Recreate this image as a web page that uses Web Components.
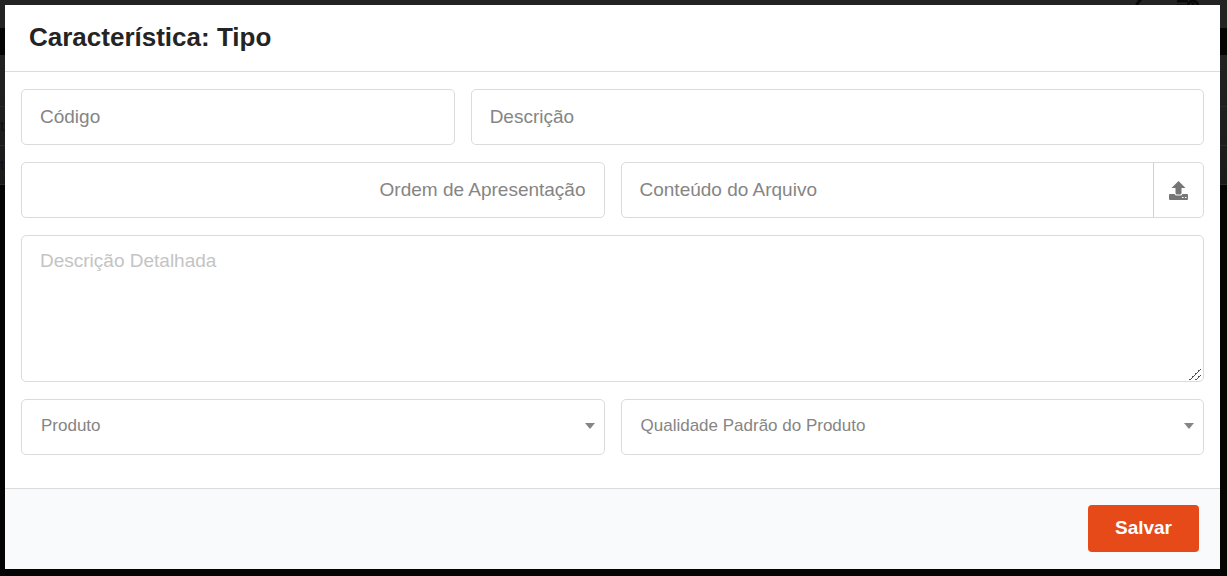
<!DOCTYPE html>
<html lang="pt-BR">
<head>
<meta charset="utf-8">
<meta name="viewport" content="width=device-width, initial-scale=1">
<title>Característica: Tipo</title>
<style>
    body{
        margin: 0;
        min-height: 100vh;
        background: #040404;
        font-family: "Liberation Sans", Arial, sans-serif;
        color: #242424;
    }
</style>
</head>
<body>
<page-backdrop></page-backdrop>
<modal-dialog heading="Característica: Tipo">
    <form-grid>
        <text-field span="3" label="Código"></text-field>
        <text-field span="5" label="Descrição"></text-field>
        <text-field span="4" label="Ordem de Apresentação" align="right"></text-field>
        <file-field span="4" label="Conteúdo do Arquivo"></file-field>
        <area-field span="8" label="Descrição Detalhada"></area-field>
        <select-field span="4" label="Produto"></select-field>
        <select-field span="4" label="Qualidade Padrão do Produto"></select-field>
    </form-grid>
    <save-button slot="footer">Salvar</save-button>
</modal-dialog>

<script>
const boxStyle = `
    *{
        box-sizing: border-box;
    }

    :host{
        display: block;
        min-width: 0;
    }

    .box{
        display: grid;
        height: 56px;
        border: 1px solid #dbdbdb;
        border-radius: 5px;
        background: white;
        color: #858585;
    }

    .box:focus-within{
        border-color: #e64a19;
    }

    input, select, textarea{
        width: 100%;
        margin: 0;
        border: 0;
        outline: 0;
        background: transparent;
        color: #242424;
        font-family: inherit;
        font-size: 19px;
    }
`;

// The dimmed page that shows round the dialog
class PageBackdrop extends HTMLElement {
    constructor(){
        super();
        this.attachShadow({mode: "open"});
    }

    connectedCallback(){
        this.setAttribute("aria-hidden", "true");
        this.shadowRoot.innerHTML = `
            <style>
                :host{
                    position: absolute;
                    inset: 0;
                    z-index: -1;
                    overflow: hidden;
                    font-size: 15px;
                    line-height: 38px;
                    color: #0b0f1c;
                }

                .bar{
                    display: flex;
                    justify-content: flex-end;
                    gap: 25px;
                    height: 28px;
                    padding-right: 28px;
                    background: #232323;
                }

                .bar svg{
                    fill: none;
                    stroke: #080808;
                    stroke-width: 3;
                }

                .rows{
                    height: 130px;
                    margin-top: 27px;
                    background: linear-gradient(#222, #1a1a1a);
                }

                .head{
                    height: 51px;
                    border-bottom: 1px solid #292929;
                }

                .line{
                    border-bottom: 1px solid #292929;
                }
            </style>
            <div class="bar">
                <svg width="20" height="22"><path d="M9 -1C5 3 3 8 3 14"/></svg>
                <svg width="22" height="22"><path d="M0 1H11M0 6H9"/><circle cx="16" cy="6" r="5"/><path d="M16 3V9"/></svg>
            </div>
            <div class="rows">
                <div class="head"></div>
                <div class="line">ti</div>
                <div class="line">ti</div>
            </div>
        `;
    }
}

class ModalDialog extends HTMLElement {
    constructor(){
        super();
        this.attachShadow({mode: "open"});
    }

    get heading(){
        return this.getAttribute("heading");
    }

    connectedCallback(){
        this.shadowRoot.innerHTML = `
            <style>
                :host{
                    display: block;
                    margin: 0 7px 0 5px;
                    padding: 5px 0 7px;
                }

                section{
                    background: white;
                }

                header{
                    padding: 16px 24px 18px;
                    border-bottom: 1px solid #dbdbdb;
                }

                h1{
                    margin: 0;
                    font-size: 26px;
                    line-height: 32px;
                }

                .content{
                    padding: 17px 16px 33px;
                }

                footer{
                    display: flex;
                    justify-content: flex-end;
                    padding: 16px 21px 17px;
                    border-top: 1px solid #dbdbdb;
                    background: #f8fafc;
                }
            </style>
            <section role="dialog" aria-modal="true" aria-labelledby="heading">
                <header><h1 id="heading">${this.heading}</h1></header>
                <div class="content"><slot></slot></div>
                <footer><slot name="footer"></slot></footer>
            </section>
        `;
    }
}

class FormGrid extends HTMLElement {
    constructor(){
        super();
        this.attachShadow({mode: "open"});
    }

    connectedCallback(){
        this.shadowRoot.innerHTML = `
            <style>
                :host{
                    display: grid;
                    grid-template-columns: repeat(8, minmax(0, 1fr));
                    gap: 17px 16px;
                }

                ::slotted([span="3"]){ grid-column: span 3; }
                ::slotted([span="4"]){ grid-column: span 4; }
                ::slotted([span="5"]){ grid-column: span 5; }
                ::slotted([span="8"]){ grid-column: span 8; }
            </style>
            <slot></slot>
        `;
    }
}

class FormField extends HTMLElement {
    constructor(){
        super();
        this.attachShadow({mode: "open"});
    }

    get label(){
        return this.getAttribute("label");
    }

    connectedCallback(){
        this.render();
    }
}

class TextField extends FormField {
    get align(){
        return this.getAttribute("align") || "left";
    }

    render(){
        this.shadowRoot.innerHTML = `
            <style>
                ${boxStyle}

                .box{
                    grid-template-columns: minmax(0, 1fr) auto;
                }

                label, input{
                    grid-area: 1 / 1;
                    padding: 0 18px;
                    text-align: ${this.align};
                }

                label{
                    font-size: 19px;
                    line-height: 54px;
                    white-space: nowrap;
                }

                .box:has(input:not(:placeholder-shown)) label{
                    visibility: hidden;
                }

                button{
                    display: grid;
                    place-items: center;
                    width: 50px;
                    padding: 0;
                    border: 0;
                    border-left: 1px solid #d0d0d0;
                    background: none;
                    color: #757575;
                }
            </style>
            <div class="box">
                <label for="field">${this.label}</label>
                <input id="field" type="text" placeholder=" ">
                ${this.addon()}
            </div>
        `;
    }

    addon(){
        return "";
    }
}

class FileField extends TextField {
    addon(){
        return `
            <button type="button" aria-label="Enviar arquivo">
                <svg width="20" height="20" viewBox="0 0 20 20" fill="currentColor">
                    <path d="M9.5 1L16.5 8H12.5V13Q12.5 14.500 11 14.500H8Q6.500 14.500 6.500 13V8H2.500Z"/>
                    <path fill-rule="evenodd" d="M1 14H5.500Q6 15.500 8 15.500H11Q13 15.500 13.500 14H18Q19 14 19 15V19Q19 20 18 20H1Q0 20 0 19V15Q0 14 1 14ZM13 17V18H14.500V17ZM16 17V18H17.500V17Z"/>
                </svg>
            </button>
        `;
    }
}

class AreaField extends FormField {
    render(){
        this.shadowRoot.innerHTML = `
            <style>
                ${boxStyle}

                .box{
                    height: auto;
                }

                textarea{
                    display: block;
                    height: 145px;
                    padding: 14px 18px;
                    line-height: 22px;
                    resize: vertical;
                }

                textarea::placeholder{
                    color: #c4c4c4;
                }

                textarea::-webkit-resizer{
                    background: linear-gradient(135deg, transparent 50%, #555 50% 58%, transparent 58% 75%, #555 75% 83%, transparent 83%) 1px 2px / 12px 12px no-repeat;
                }
            </style>
            <div class="box">
                <textarea aria-label="${this.label}" placeholder="${this.label}"></textarea>
            </div>
        `;
    }
}

class SelectField extends FormField {
    render(){
        this.shadowRoot.innerHTML = `
            <style>
                ${boxStyle}

                .box{
                    align-items: center;
                }

                select, svg{
                    grid-area: 1 / 1;
                }

                select{
                    appearance: none;
                    height: 54px;
                    padding: 0 32px 4px 19px;
                    color: #858585;
                    font-size: 17px;
                }

                svg{
                    justify-self: end;
                    margin: 0 9px 2px 0;
                    pointer-events: none;
                }
            </style>
            <div class="box">
                <select aria-label="${this.label}">
                    <option>${this.label}</option>
                </select>
                <svg width="10" height="6" fill="currentColor"><path d="M0 0H10L5 6Z"/></svg>
            </div>
        `;
    }
}

class SaveButton extends HTMLElement {
    constructor(){
        super();
        this.attachShadow({mode: "open"});
    }

    connectedCallback(){
        this.shadowRoot.innerHTML = `
            <style>
                button{
                    display: block;
                    height: 47px;
                    padding: 0 27px 2px;
                    border: 0;
                    border-radius: 4px;
                    background: #e64a19;
                    color: white;
                    font: bold 19px/45px "Liberation Sans", Arial, sans-serif;
                    cursor: pointer;
                }
            </style>
            <button type="button"><slot></slot></button>
        `;
    }
}

customElements.define("page-backdrop", PageBackdrop);
customElements.define("modal-dialog", ModalDialog);
customElements.define("form-grid", FormGrid);
customElements.define("text-field", TextField);
customElements.define("file-field", FileField);
customElements.define("area-field", AreaField);
customElements.define("select-field", SelectField);
customElements.define("save-button", SaveButton);
</script>
</body>
</html>
